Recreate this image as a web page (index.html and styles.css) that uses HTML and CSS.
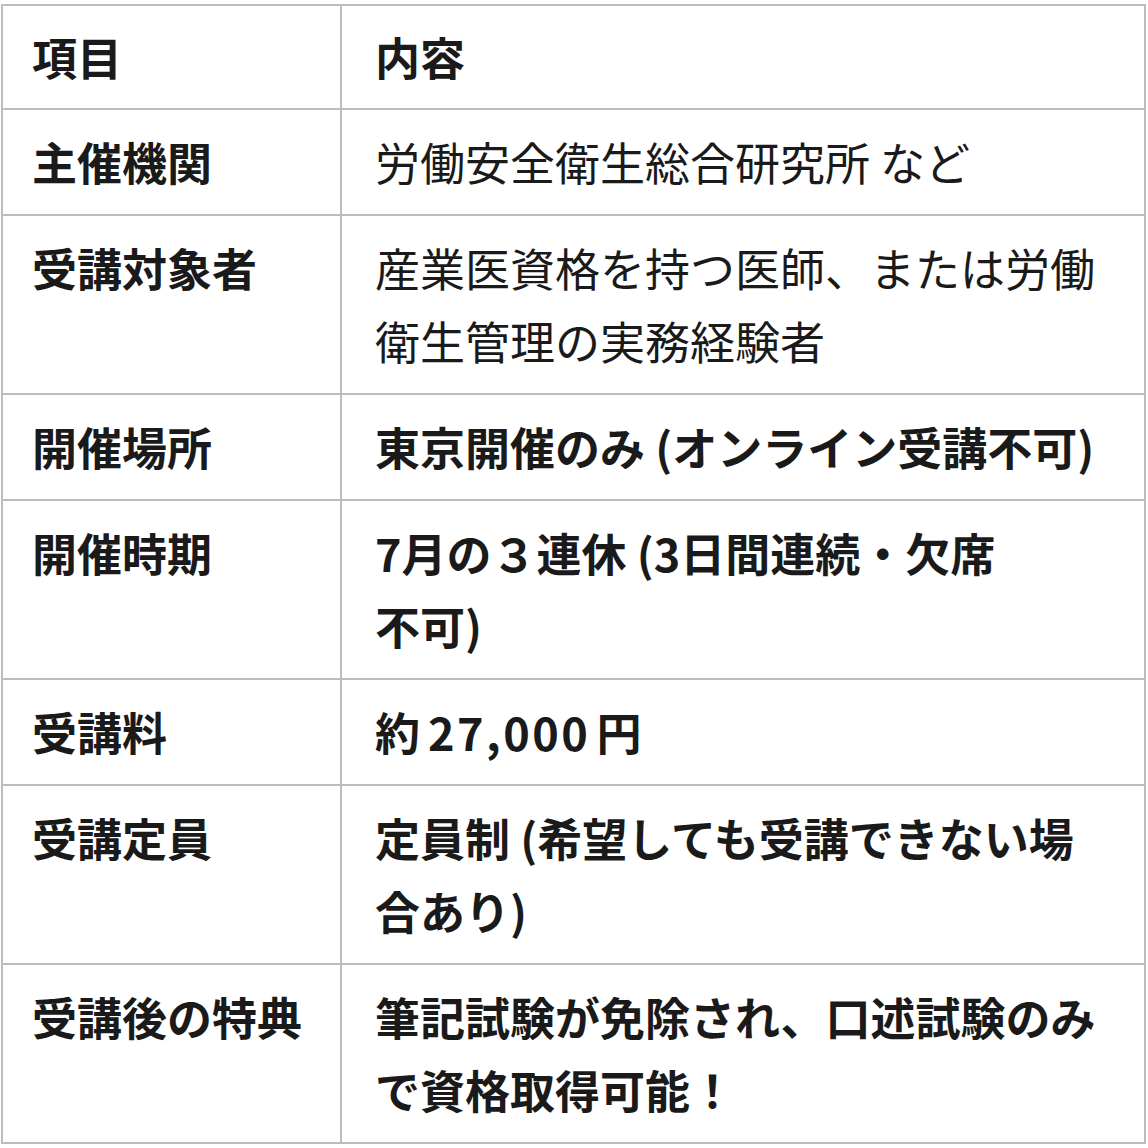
FILE: index.html
```html
<!DOCTYPE html>
<html lang="ja">
<head>
<meta charset="utf-8">
<title>受講概要</title>
<link rel="stylesheet" href="styles.css">
</head>
<body>
<table class="info">
  <colgroup>
    <col class="c1">
    <col class="c2">
  </colgroup>
  <thead>
    <tr><th>項目</th><th>内容</th></tr>
  </thead>
  <tbody>
    <tr><th>主催機関</th><td>労働安全衛生総合研究所 など</td></tr>
    <tr><th>受講対象者</th><td>産業医資格を持つ医師、または労働衛生管理の実務経験者</td></tr>
    <tr><th>開催場所</th><td class="b">東京開催のみ (オンライン受講不可)</td></tr>
    <tr><th>開催時期</th><td class="b">7月の３連休 (3日間連続・欠席<br>不可)</td></tr>
    <tr><th>受講料</th><td class="b">約<span class="gap">27,000</span>円</td></tr>
    <tr><th>受講定員</th><td class="b">定員制 (希望しても受講できない場合あり)</td></tr>
    <tr><th>受講後の特典</th><td class="b">筆記試験が免除され、口述試験のみで資格取得可能！</td></tr>
  </tbody>
</table>
</body>
</html>
```

FILE: styles.css
```css
html, body {
  margin: 0;
  padding: 0;
  background: #ffffff;
}

body {
  padding: 4px 0 0 1px;
  font-family: "Noto Sans CJK JP", "Noto Sans", sans-serif;
  color: #1a1a1a;
}

.info {
  border-collapse: collapse;
  table-layout: fixed;
  width: 1145px;
  font-size: 45px;
  line-height: 73px;
}

.info .c1 { width: 339px; }

.info th,
.info td {
  border: 2px solid #bdbdbd;
  text-align: left;
  vertical-align: top;
  padding: 15px 30px 16px 33px;
}

.info th {
  font-weight: 700;
}

.info th:first-child {
  padding-left: 29px;
}

.info thead th {
  padding-top: 14px;
  padding-bottom: 15px;
}

.info td {
  font-weight: 400;
}

.info td.b {
  font-weight: 700;
}

.gap {
  margin: 0 6px 0 8px;
  letter-spacing: 2.5px;
}
```
